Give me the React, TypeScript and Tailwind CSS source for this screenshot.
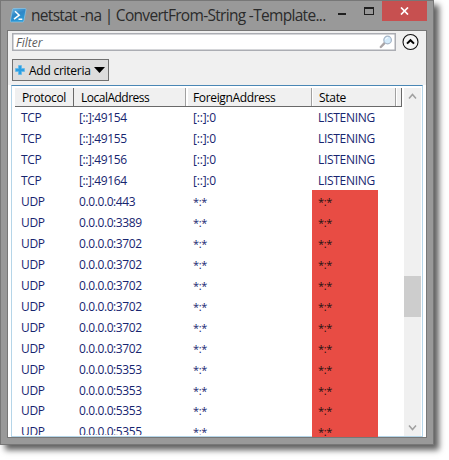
import React from "react";

type Row = { protocol: string; local: string; foreign: string; state: string };

const tcp = (port: string): Row => ({ protocol: "TCP", local: `[::]:${port}`, foreign: "[::]:0", state: "LISTENING" });
const udp = (port: string): Row => ({ protocol: "UDP", local: `0.0.0.0:${port}`, foreign: "*:*", state: "*:*" });

const rows: Row[] = [
  ...["49154", "49155", "49156", "49164"].map(tcp),
  ...["443", "3389", "3702", "3702", "3702", "3702", "3702", "3702", "5353", "5353", "5353", "5355"].map(udp),
];

function PowerShellIcon() {
  return (
    <svg width="17" height="15" viewBox="0 0 17 15" className="shrink-0">
      <defs>
        <linearGradient id="ps" x1="0" y1="0" x2="0.5" y2="1">
          <stop offset="0" stopColor="#6fb9e6" />
          <stop offset="0.5" stopColor="#2f87c6" />
          <stop offset="1" stopColor="#2a9bd8" />
        </linearGradient>
      </defs>
      <path d="M3.5 .5H15a1 1 0 0 1 1 1.2l-2.2 11.3a1.3 1.3 0 0 1-1.3 1H1.2a.8.8 0 0 1-.8-1L2.5 1.4a1.2 1.2 0 0 1 1-.9Z" fill="url(#ps)" stroke="#8bc6e8" strokeWidth=".7" />
      <path d="M5 3.3l4.2 3.9-5.2 4M8.5 11.2h3.8" fill="none" stroke="#fff" strokeWidth="1.5" />
    </svg>
  );
}

function TitleBar() {
  return (
    <div className="flex h-[29px] shrink-0 items-start pl-[9px] pr-[6px]">
      <div className="pt-[7px]"><PowerShellIcon /></div>
      <div className="ml-[4px] h-[26px] w-[297px] whitespace-nowrap pt-[2px] text-[15.5px] leading-[24px] tracking-[-0.69px] text-[#2b2b2b]">
        netstat -na | ConvertFrom-String -Template...
      </div>
      <svg width="54" height="20" className="ml-auto shrink-0" shapeRendering="crispEdges">
        <path d="M10 12h8v2h-8z" fill="#1f1f1f" />
        <path d="M36 6h10v8H36zM37 8v5h8V8z" fill="#1f1f1f" fillRule="evenodd" />
      </svg>
      <div className="flex h-5 w-[45px] shrink-0 items-center justify-center bg-[#c75050]">
        <svg width="9" height="8" viewBox="0 0 9 8"><path d="M1 .5l7 7M8 .5l-7 7" stroke="#fff" strokeWidth="1.7" /></svg>
      </div>
    </div>
  );
}

function FilterBar() {
  return (
    <div className="flex h-[18px] gap-[6px] pl-1">
      <div className="flex w-[384px] items-center justify-between border border-[#abadb3] bg-white pl-[3px] pr-[2px] shadow-[inset_0_0_0_0.5px_#abadb3]">
        <span className="pt-px text-[12px] italic leading-4 text-[#5e5e5e]">Filter</span>
        <svg width="14" height="14" viewBox="0 0 14 14">
          <path d="M1.8 12l3.7-3.8" stroke="#aaa5a7" strokeWidth="2.4" strokeLinecap="round" />
          <circle cx="8.6" cy="5" r="3.8" fill="#d3eafa" stroke="#a6b5c7" strokeWidth="1.2" />
          <path d="M6.6 4.5a2.2 2.2 0 0 1 2.2-1.9" fill="none" stroke="#fff" />
        </svg>
      </div>
      <svg width="18" height="18" viewBox="0 0 18 18" className="shrink-0">
        <circle cx="8.5" cy="9" r="7.5" fill="#f5f5f5" stroke="#111" strokeWidth="1.1" />
        <path d="M5 10.6L8.5 7.2l3.5 3.4" fill="none" stroke="#000" strokeWidth="2" />
      </svg>
    </div>
  );
}

function Header() {
  return (
    <div className="flex h-[19px] w-[387px] border-b border-[#696969] bg-[#f0f0f0] text-[12px] leading-[19px] text-black">
      <div className="w-[59px] border-r border-[#696969] pl-[7px] tracking-[-0.35px]">Protocol</div>
      <div className="w-[112px] border-r border-[#a0a0a0] pl-[7px] tracking-[-0.5px]">LocalAddress</div>
      <div className="w-[126px] border-l-2 border-r border-white border-r-[#a0a0a0] pl-[5px] tracking-[-0.35px]">ForeignAddress</div>
      <div className="w-[84px] border-l border-r border-l-white border-r-[#a0a0a0] pl-[6px] tracking-[-0.3px]">State</div>
      <div className="w-[6px] border-l border-r border-l-white border-r-[#696969]" />
    </div>
  );
}

function Rows() {
  return (
    <div className="-mt-[0.7px] h-[330.7px] w-[387px] overflow-hidden text-[12px] leading-[23px] text-[#17256f]">
      {rows.map((r, i) => {
        // The last row is partly scrolled out of view.
        const clip = i === rows.length - 1 ? "flex h-[14.6px] overflow-hidden" : "flex";
        return (
          <div key={i} className="flex h-[20.94px]">
            <div className={clip}>
              <div className="w-[58px] pl-[6px] tracking-[-0.3px]">{r.protocol}</div>
              <div className="w-[113px] pl-[6px] tracking-[-0.4px]">{r.local}</div>
              <div className={i > 3 ? "w-[126px] pl-[7px] text-[11px] tracking-[-0.4px]" : "w-[126px] pl-[7px] tracking-[-0.2px]"}>{r.foreign}</div>
            </div>
            <div className={i > 3 ? "w-[66px] bg-[#e84c44] pl-[6px] text-[11px] tracking-[-0.4px] text-[#221111]" : "w-[66px] pl-[6px] tracking-[-0.3px]"}>{r.state}</div>
          </div>
        );
      })}
    </div>
  );
}

function ScrollBar() {
  return (
    <div className="mr-[1px] flex h-[348px] w-[17px] flex-col items-center bg-[#f0f0f0] pt-[5px]">
      <svg width="9" height="7"><path d="M1 5.5L4.5 1.5 8 5.5" fill="none" stroke="#a0a0a0" strokeWidth="1.5" /></svg>
      <div className="mt-[176px] h-[41px] w-full bg-[#cdcdcd]" />
      <svg width="9" height="7" className="mb-[5px] mt-auto"><path d="M1 1.5L4.5 5.5 8 1.5" fill="none" stroke="#a0a0a0" strokeWidth="1.5" /></svg>
    </div>
  );
}

export default function App() {
  return (
    <div className="h-[460px] w-[449px] overflow-hidden bg-white font-['Open_Sans','Noto_Sans',sans-serif]">
      <div className="flex h-[445px] w-[434px] flex-col border border-[#777] bg-[#999] shadow-[5px_5px_6px_0px_#606060]">
        <TitleBar />
        <div className="ml-[6px] flex h-[408px] w-[420px] shrink-0 flex-col border border-[#777] bg-[#f0f0f0] pt-[2px]">
          <FilterBar />
          <div className="flex h-[34px] pl-1 pt-[8px]">
            <div className="flex h-[22px] w-[97px] items-center border border-[#707070] bg-[#ddd] pl-[2px] text-[12px] text-black">
              <svg width="10" height="10" viewBox="0 0 10 10"><path d="M3.5.5h3v3h3v3h-3v3h-3v-3h-3v-3h3z" fill="#2b9fe3" stroke="#62b9e9" strokeWidth=".7" /></svg>
              <span className="ml-[4px] whitespace-nowrap pt-px tracking-[-0.25px]">Add criteria</span>
              <svg width="11" height="6" className="ml-auto mr-[3px]"><path d="M0 0h11L5.5 6z" fill="#000" /></svg>
            </div>
          </div>
          <div className="h-[352px] bg-white pl-[3px] pr-[3px]">
            <div className="flex h-[352px] w-[412px] justify-between border border-[#b5d5e8] border-t-[#4a87b5] pl-[3px] pt-[2px]">
              <div>
                <Header />
                <Rows />
              </div>
              <ScrollBar />
            </div>
          </div>
        </div>
      </div>
    </div>
  );
}
